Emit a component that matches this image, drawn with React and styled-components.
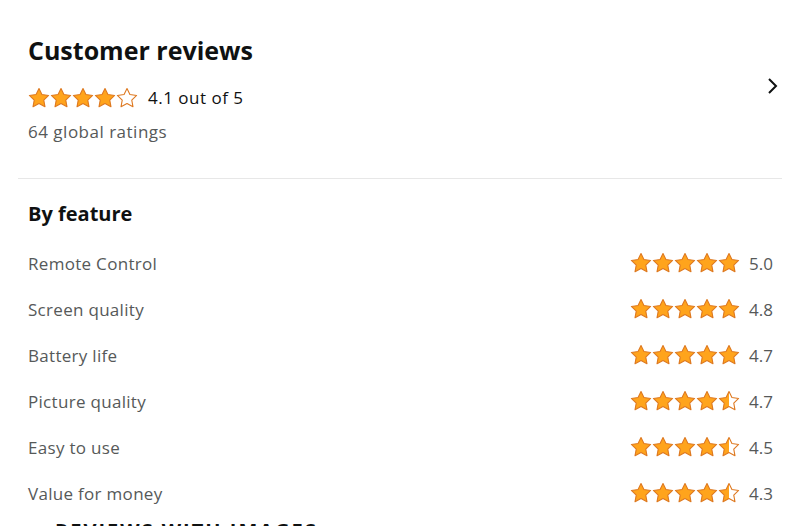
import React from "react";
import styled, { createGlobalStyle } from "styled-components";

const GlobalStyle = createGlobalStyle`
  html, body {
    margin: 0;
    padding: 0;
    background: #ffffff;
    overflow: hidden;
  }
  body {
    font-family: "Open Sans", "Noto Sans", sans-serif;
    color: #0f1111;
  }
`;

const Page = styled.div`
  width: 800px;
  height: 526px;
  overflow: hidden;
  padding: 0 18px;
  box-sizing: border-box;
`;

const Summary = styled.section`
  display: flex;
  justify-content: space-between;
  align-items: flex-start;
  padding: 34px 2px 35px 10px;
  border-bottom: 1px solid #e7e7e7;
`;

const SummaryText = styled.div`
  display: flex;
  flex-direction: column;
`;

const Title = styled.h2`
  margin: 0;
  font-size: 25px;
  line-height: 32px;
  font-weight: 700;
`;

const OverallRow = styled.div`
  display: flex;
  align-items: center;
  gap: 10px;
  margin-top: 20px;
  font-size: 17px;
  line-height: 24px;
  letter-spacing: 0.5px;
`;

const Ratings = styled.div`
  margin-top: 11px;
  font-size: 17px;
  line-height: 22px;
  letter-spacing: 0.5px;
  color: #565959;
`;

const Chevron = styled.div`
  margin-top: 42px;
  display: flex;
`;

const Features = styled.section`
  padding: 22px 9px 0 10px;
`;

const Subtitle = styled.h3`
  margin: 0 0 13px;
  font-size: 20px;
  line-height: 26px;
  font-weight: 700;
`;

const FeatureRow = styled.div`
  display: flex;
  justify-content: space-between;
  align-items: center;
  height: 46px;
`;

const FeatureName = styled.span`
  font-size: 17px;
  letter-spacing: 0.3px;
  color: #565959;
`;

const FeatureScore = styled.div`
  display: flex;
  align-items: center;
  gap: 9px;
  font-size: 17px;
  color: #565959;
`;

const Stars = styled.div`
  display: flex;
  gap: ${(p) => p.$gap}px;
`;

const NextHeading = styled.h3`
  margin: 3px 0 0 37px;
  font-size: 20px;
  line-height: 24px;
  font-weight: 700;
  letter-spacing: 2px;
  color: #0f1111;
  text-transform: uppercase;
  white-space: nowrap;
`;

const STAR = "M12 1.6l3.2 6.6 7.3 1-5.3 5.1 1.3 7.2L12 18l-6.5 3.5 1.3-7.2L1.5 9.2l7.3-1z";

function Star({ fill, size }) {
  const id = `half-${size}`;
  return (
    <svg width={size} height={size} viewBox="0 0 24 24">
      <defs>
        <linearGradient id={id} x1="0" x2="1" y1="0" y2="0">
          <stop offset="50%" stopColor="#ffa41c" />
          <stop offset="50%" stopColor="#ffffff" />
        </linearGradient>
      </defs>
      <path
        d={STAR}
        fill={fill === 1 ? "#ffa41c" : fill === 0.5 ? `url(#${id})` : "#ffffff"}
        stroke="#de7921"
        strokeWidth="1.2"
        strokeLinejoin="round"
      />
    </svg>
  );
}

function StarRow({ value, size = 22, gap = -0.5 }) {
  const stars = [1, 2, 3, 4, 5].map((i) => {
    if (value >= i) return 1;
    if (value > i - 1) return 0.5;
    return 0;
  });
  return (
    <Stars $gap={gap}>
      {stars.map((f, i) => (
        <Star key={i} fill={f} size={size} />
      ))}
    </Stars>
  );
}

const features = [
  { name: "Remote Control", score: "5.0", stars: 5 },
  { name: "Screen quality", score: "4.8", stars: 5 },
  { name: "Battery life", score: "4.7", stars: 5 },
  { name: "Picture quality", score: "4.7", stars: 4.5 },
  { name: "Easy to use", score: "4.5", stars: 4.5 },
  { name: "Value for money", score: "4.3", stars: 4.5 },
];

export default function App() {
  return (
    <Page>
      <GlobalStyle />
      <Summary>
        <SummaryText>
          <Title>Customer reviews</Title>
          <OverallRow>
            <StarRow value={4} />
            <span>4.1 out of 5</span>
          </OverallRow>
          <Ratings>64 global ratings</Ratings>
        </SummaryText>
        <Chevron>
          <svg width="14" height="20" viewBox="0 0 14 20">
            <path d="M3 3l7 7-7 7" fill="none" stroke="#0f1111" strokeWidth="2" />
          </svg>
        </Chevron>
      </Summary>
      <Features>
        <Subtitle>By feature</Subtitle>
        {features.map((f) => (
          <FeatureRow key={f.name}>
            <FeatureName>{f.name}</FeatureName>
            <FeatureScore>
              <StarRow value={f.stars} />
              <span>{f.score}</span>
            </FeatureScore>
          </FeatureRow>
        ))}
      </Features>
      <NextHeading>Reviews with images</NextHeading>
    </Page>
  );
}
